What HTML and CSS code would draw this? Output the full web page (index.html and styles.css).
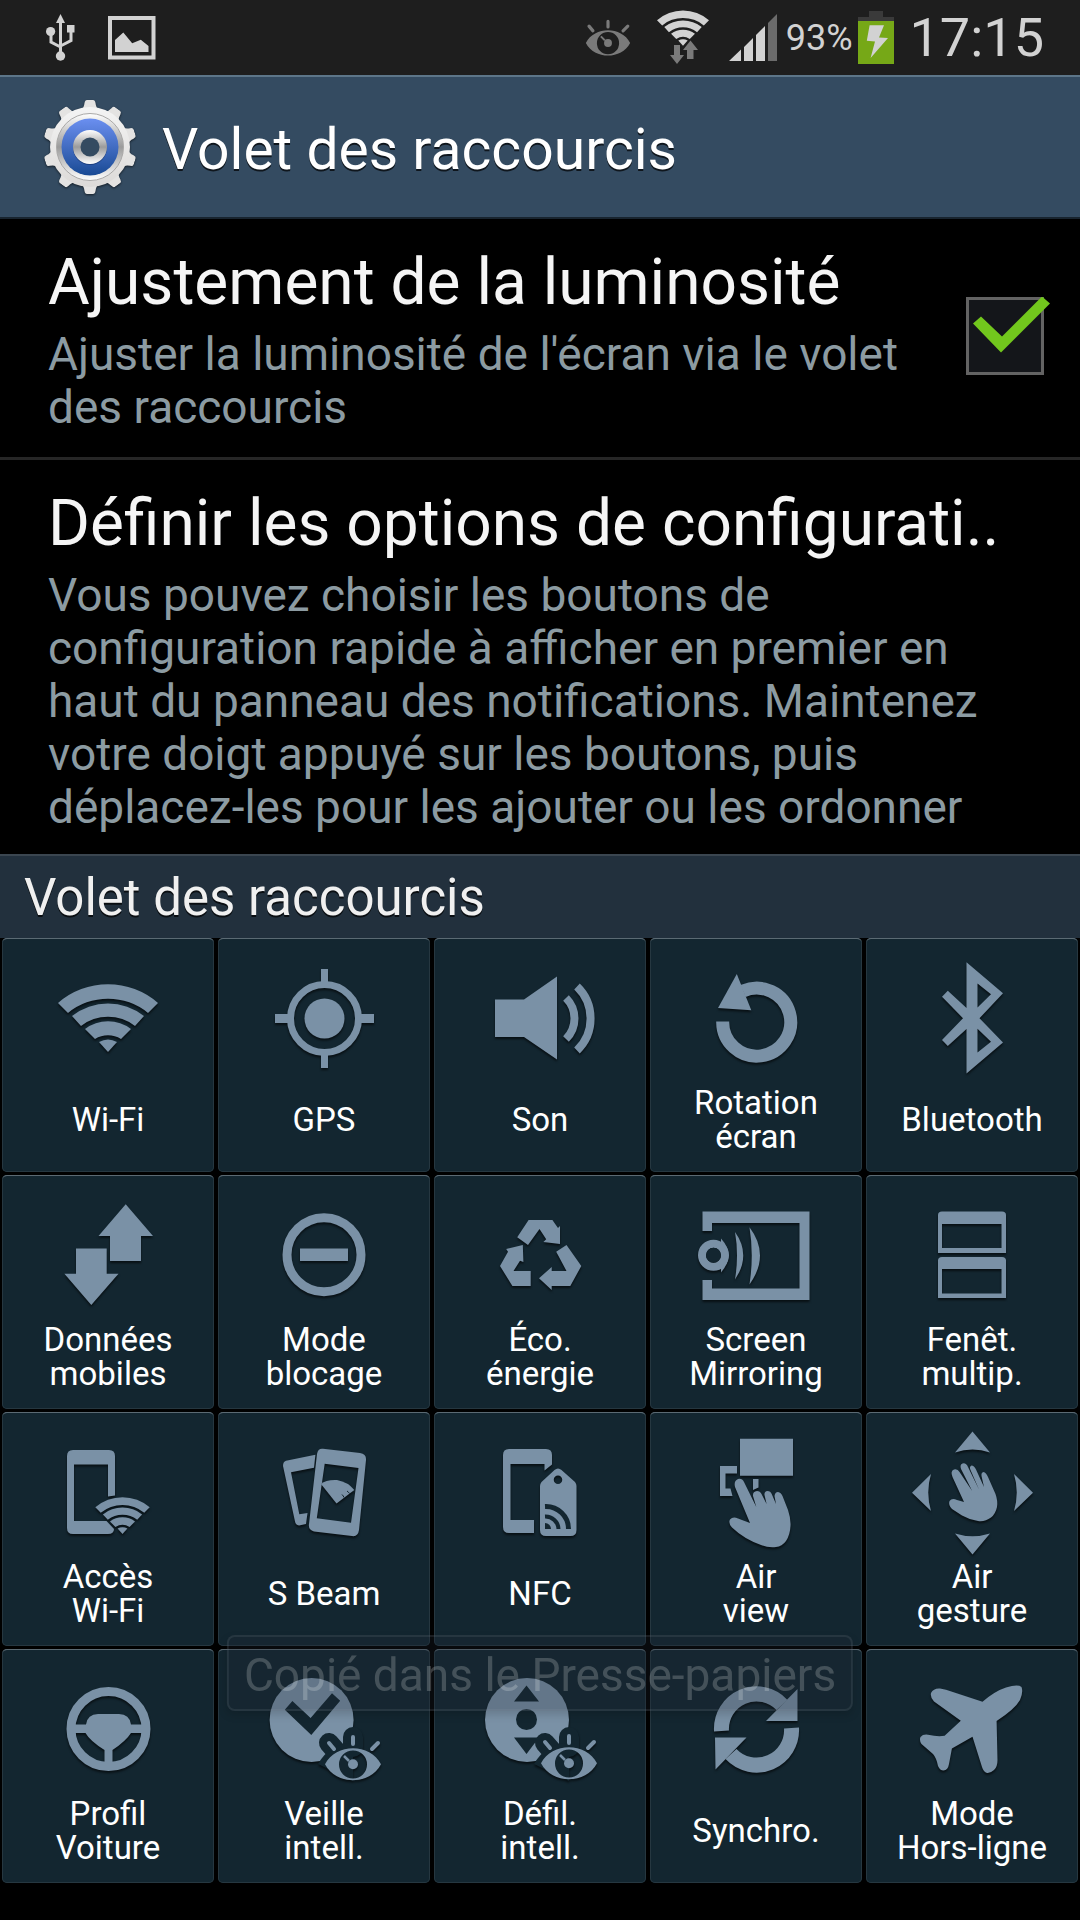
FILE: index.html
```html
<!DOCTYPE html>
<html lang="fr">
<head>
    <meta charset="utf-8">
    <meta name="viewport" content="width=device-width, initial-scale=1">
    <title>Volet des raccourcis</title>
    <link rel="stylesheet" href="styles.css">
</head>
<body>

    <!-- Formes partagées par plusieurs icônes -->
    <svg class="sprite" aria-hidden="true">
        <symbol id="wifi" viewBox="22 46 100 68">
            <path d="M22 65A76 76 0 0 1 122 65L112 75A63 63 0 0 0 32 75Z"/>
            <path d="M36 78A58 58 0 0 1 108 78L99 88A44 44 0 0 0 45 88Z"/>
            <path d="M49 91A38 38 0 0 1 95 91L85 101A25 25 0 0 0 59 101Z"/>
            <path d="M63 104A18 18 0 0 1 81 104L72 114Z"/>
        </symbol>
        <symbol id="eye" viewBox="72 85 58 48">
            <path d="M73 115.300C84 94 118 94 129 115.300C118 136.500 84 136.500 73 115.300ZM101 101.500A14 14 0 1 0 101 129.500A14 14 0 1 0 101 101.500Z" fill-rule="evenodd"/>
            <circle cx="101" cy="115.300" r="5"/>
            <path d="M92 107L97 112" fill="none" stroke="currentColor" stroke-width="2.500"/>
            <path d="M101 88V95M77 94L82 100M126 94L120 100" fill="none" stroke="currentColor" stroke-width="4" stroke-linecap="round"/>
        </symbol>
        <symbol id="tooth" viewBox="0 0 94 94">
            <path d="M38 10Q41 8 41.500 3Q42 0 44 0H50Q52 0 52.500 3Q53 8 56 10Z"/>
        </symbol>
    </svg>

    <header class="status-bar">
        <div class="status-group">
            <svg class="status-icon" width="30" height="50" viewBox="46 13 30 50" aria-hidden="true">
                <path d="M60.500 14L65 23H56Z"/>
                <circle cx="60.500" cy="56" r="4.700"/>
                <circle cx="50.600" cy="31.500" r="4.600"/>
                <path d="M67 25H74.500V32.500H67Z"/>
                <path d="M60.500 22V54M51 34V42L60.500 47M71 32V40.500L60.500 46" fill="none" stroke="currentColor" stroke-width="3"/>
            </svg>
            <svg class="status-icon" width="48" height="44" viewBox="108 16 48 44" aria-hidden="true">
                <path d="M110 18H153.500V57.500H110Z" fill="none" stroke="currentColor" stroke-width="4"/>
                <path d="M115 40L123.300 32.500L132.200 43.300L140.800 39.700L148.500 46V52H115Z"/>
            </svg>
        </div>
        <div class="status-group status-right">
            <svg class="status-eye dim" width="46" height="38" aria-hidden="true"><use href="#eye"/></svg>
            <svg class="status-icon" width="52" height="56" viewBox="0 0 52 56" aria-hidden="true">
                <use href="#wifi" width="52" height="36"/>
                <path class="dim" d="M17 35H23V45H27L20 54L13 45H17Z"/>
                <path class="dim" d="M30 49V40H26L33.500 30.500L41 40H36.500V49Z"/>
            </svg>
            <svg class="status-icon" width="48" height="48" viewBox="728 16 48 48" aria-hidden="true">
                <path d="M728 63L740 51.500V63ZM743 63V49L752 40V63ZM755 63V37L764 28V63Z"/>
                <path class="weak" d="M767 63V25L776 16V63Z"/>
            </svg>
            <span class="battery-level">93%</span>
            <svg class="status-icon" width="36" height="54" viewBox="858 11 36 54" aria-hidden="true">
                <path d="M858 17H869V11H883V17H894V22H858Z" fill="#3a3a3a"/>
                <path d="M858 21H894V64H858Z" fill="#76a817"/>
                <path d="M869.600 25.300H884L879 37.500L888 38L870.600 58L875 41.500L866.800 40.700Z"/>
            </svg>
            <span class="clock">17:15</span>
        </div>
    </header>

    <div class="action-bar">
        <svg class="gear" width="94" height="94" viewBox="0 0 94 94" aria-hidden="true">
            <defs>
                <linearGradient id="metal" x1="0" y1="0" x2="0" y2="1">
                    <stop offset="0" stop-color="#f4f4f4"/>
                    <stop offset="1" stop-color="#dcdad8"/>
                </linearGradient>
                <linearGradient id="rim" x1="0" y1="0" x2="0" y2="1">
                    <stop offset="0" stop-color="#ffffff"/>
                    <stop offset="0.500" stop-color="#9b9b9b"/>
                    <stop offset="1" stop-color="#ffffff"/>
                </linearGradient>
                <linearGradient id="blue" x1="0" y1="0" x2="0" y2="1">
                    <stop offset="0" stop-color="#6b8ff0"/>
                    <stop offset="1" stop-color="#194a94"/>
                </linearGradient>
            </defs>
            <g fill="#e4e3e2">
                <use href="#tooth"/>
                <use href="#tooth" transform="rotate(36 47 47)"/>
                <use href="#tooth" transform="rotate(72 47 47)"/>
                <use href="#tooth" transform="rotate(108 47 47)"/>
                <use href="#tooth" transform="rotate(144 47 47)"/>
                <use href="#tooth" transform="rotate(180 47 47)"/>
                <use href="#tooth" transform="rotate(216 47 47)"/>
                <use href="#tooth" transform="rotate(252 47 47)"/>
                <use href="#tooth" transform="rotate(288 47 47)"/>
                <use href="#tooth" transform="rotate(324 47 47)"/>
            </g>
            <circle cx="47" cy="47" r="40" fill="url(#metal)"/>
            <circle cx="47" cy="47" r="33.500" fill="url(#rim)" stroke="#aaa9a8"/>
            <circle cx="47" cy="47" r="28.500" fill="url(#blue)"/>
            <circle cx="47" cy="48" r="17" fill="#1c3f80"/>
            <circle cx="47" cy="47" r="17" fill="url(#rim)"/>
            <circle cx="47" cy="47" r="9.500" fill="#344b61"/>
        </svg>
        <h1>Volet des raccourcis</h1>
    </div>

    <main>
        <div class="setting">
            <div class="setting-text">
                <label class="setting-title" for="luminosite">Ajustement de la luminosité</label>
                <p>Ajuster la luminosité de l'écran via le volet des raccourcis</p>
            </div>
            <input type="checkbox" id="luminosite" checked>
        </div>
        <div class="setting setting-last">
            <div class="setting-text">
                <h2 class="setting-title">Définir les options de configurati..</h2>
                <p>Vous pouvez choisir les boutons de configuration rapide à afficher en premier en haut du panneau des notifications. Maintenez votre doigt appuyé sur les boutons, puis déplacez-les pour les ajouter ou les ordonner</p>
            </div>
        </div>

        <h2 class="section-title">Volet des raccourcis</h2>

        <div class="tiles">
            <button class="tile" type="button">
                <svg viewBox="0 0 144 148" aria-hidden="true"><use href="#wifi" x="22" y="46" width="100" height="68"/></svg>
                <span>Wi-Fi</span>
            </button>
            <button class="tile" type="button">
                <svg viewBox="0 0 144 148" aria-hidden="true">
                    <circle cx="72.500" cy="80.500" r="20"/>
                    <circle class="line" cx="72.500" cy="80.500" r="34" stroke-width="7"/>
                    <path d="M69 31H76V46H69ZM69 115H76V130H69ZM23 76H38V85H23ZM107 76H122V85H107Z"/>
                </svg>
                <span>GPS</span>
            </button>
            <button class="tile" type="button">
                <svg viewBox="0 0 144 148" aria-hidden="true">
                    <path d="M27 61.500H56L89 38.500V121.500L56 99H27Z"/>
                    <path class="line" d="M98 60A29 29 0 0 1 98 101M109 48.500A44.500 44.500 0 0 1 109 112.500" stroke-width="8"/>
                </svg>
                <span>Son</span>
            </button>
            <button class="tile" type="button">
                <svg viewBox="0 0 144 148" aria-hidden="true">
                    <path class="line" d="M38.700 83.500A34 34 0 1 0 59 53" stroke-width="13"/>
                    <path d="M52.800 36L67.300 72.300L34 70Z"/>
                </svg>
                <span>Rotation<br>écran</span>
            </button>
            <button class="tile" type="button">
                <svg viewBox="0 0 144 148" aria-hidden="true">
                    <path fill-rule="evenodd" d="M66.500 24.300L103 55.300L79.500 80.300L103 104.500L66.500 135.500V91L47.800 108L42 102L63 80.300L42 58.700L47.800 52.700L66.500 70ZM77.500 45.500V69.500L91 56.300ZM77.500 90.700V114.500L91 103.700Z"/>
                </svg>
                <span>Bluetooth</span>
            </button>

            <button class="tile" type="button">
                <svg viewBox="0 0 144 148" aria-hidden="true">
                    <path d="M89.700 29.300L117 61H105V86H74V61H62.500Z"/>
                    <path d="M55.300 130L28.400 98.700H40V73.500H70.700V98.700H82.500Z"/>
                </svg>
                <span>Données<br>mobiles</span>
            </button>
            <button class="tile" type="button">
                <svg viewBox="0 0 144 148" aria-hidden="true">
                    <circle class="line" cx="72" cy="79.700" r="37" stroke-width="9"/>
                    <path d="M48 73.500H96V86H48Z"/>
                </svg>
                <span>Mode<br>blocage</span>
            </button>
            <button class="tile" type="button">
                <svg viewBox="0 0 144 148" aria-hidden="true">
                    <path d="M60.600 45H84.400L90 53L92 51V69L75.400 67L78.200 64.300L71.500 54L60 70L49.200 62.300Z"/>
                    <path d="M38.200 74L54.800 70L55.400 87L52 85.700L45.500 96H62.700V111H44.400L32 91L40 76.700Z"/>
                    <path d="M98.500 70L113.300 91L102.300 111H83.700V115L71 103.300L83.700 92V96H98.500L88.200 76.700Z"/>
                </svg>
                <span>Éco.<br>énergie</span>
            </button>
            <button class="tile" type="button">
                <svg viewBox="0 0 144 148" aria-hidden="true">
                    <path d="M18.500 36.500H125.500V125H18.500V105H28V113.500H115.500V48H28V56H18.500Z"/>
                    <circle class="line" cx="29.500" cy="80.300" r="11.500" stroke-width="8"/>
                    <path d="M37 63.500Q52 80 37 97.500Z"/>
                    <circle class="hole" cx="29.500" cy="80.300" r="7.500"/>
                    <path d="M51 57Q67.500 80 51 104.500Q55 80 51 57ZM65.500 52.300Q86.500 80 65.500 109.500Q70 80 65.500 52.300Z"/>
                </svg>
                <span>Screen<br>Mirroring</span>
            </button>
            <button class="tile" type="button">
                <svg viewBox="0 0 144 148" aria-hidden="true">
                    <path fill-rule="evenodd" d="M38 78V40Q38 36.500 42 36.500H102Q106 36.500 106 40V78ZM42 49V73H101.500V49Z"/>
                    <path fill-rule="evenodd" d="M38 123V85.500Q38 82 42 82H102Q106 82 106 85.500V123ZM42 94V118.500H101.500V94Z"/>
                </svg>
                <span>Fenêt.<br>multip.</span>
            </button>

            <button class="tile" type="button">
                <svg viewBox="0 0 144 148" aria-hidden="true">
                    <path d="M79 83.500L72 84.500V52.500H38V109H70.500L78 117Q78 122 72 122H37Q31 122 31 116V44Q31 38 37 38H73Q79 38 79 44Z"/>
                    <use href="#wifi" x="59" y="85" width="55" height="37"/>
                </svg>
                <span>Accès<br>Wi-Fi</span>
            </button>
            <button class="tile" type="button">
                <svg viewBox="0 0 144 148" aria-hidden="true">
                    <path d="M63.400 42.700L62 55.700L39 60.300L47.300 102.300L55.500 101L54 112L47 113.500Q43.500 113 43 109.500L31 54Q31 49.500 34 48.700Z"/>
                    <path fill-rule="evenodd" d="M71 36.700L108 41Q114.500 42 114 48L107 118Q106 125 100 124L62 119.500Q56 118 57 112L65 42Q66 36 71 36.700ZM72.700 51.700L64.800 106.300L99 110.700L106.500 56Z"/>
                    <path d="M69 72Q74 67.500 85 68Q96 70 102.300 78L84.500 91.500Z"/>
                    <path class="cut" d="M90 82.500Q91.500 84 92 85.500M95 79Q96.500 80 97.500 81.500" stroke-width="1"/>
                </svg>
                <span>S Beam</span>
            </button>
            <button class="tile" type="button">
                <svg viewBox="0 0 144 148" aria-hidden="true">
                    <path d="M66 108V121H41Q35 121 35 115V43Q35 37 41 37H78Q84 37 84 43V52.500L76.500 58.500V52H42.500V108Z"/>
                    <path fill-rule="evenodd" d="M86.500 58Q90 55 93.500 58L107 70Q108.500 72 108.500 74V118Q108.500 124 102.500 124H78Q72 124 72 118V74Q72 72 73.500 70ZM90 63.500A4.200 4.200 0 1 0 90 72A4.200 4.200 0 1 0 90 63.500Z"/>
                    <path class="cut" d="M77 94.500A22.500 22.500 0 0 1 100.500 117" stroke-width="5"/>
                    <path class="cut" d="M77 104.500A13 13 0 0 1 90.500 117" stroke-width="4"/>
                    <path class="hole" d="M77 111A6 6 0 0 1 83 117H77Z"/>
                </svg>
                <span>NFC</span>
            </button>
            <button class="tile" type="button">
                <svg viewBox="0 0 144 148" aria-hidden="true">
                    <path d="M56 26.700H109V63.700H56ZM36 54H53V61.500H41.500V76.500H46.500L48.500 84H36ZM69 67H74.500V75.500L69 78Z"/>
                    <path d="M51 75Q49.500 69 54 67Q58 66 60 70L72.300 95L69 84Q68.500 79.500 73 79Q76 79 77.500 82L82.600 92L80.500 83Q80 79.500 83.500 79Q86.500 79 87.700 82L92 92L90.500 84Q91 80 94 80Q97 80.500 98.500 84L104 98Q107 107 106.500 114Q106 123 102 129Q98 134.500 92 135Q85 136 77 133Q60 127 48 115.500Q44 111 46 107.500Q49 104 54 106.500L66 111Z"/>
                </svg>
                <span>Air<br>view</span>
            </button>
            <button class="tile" type="button">
                <svg viewBox="0 0 144 148" aria-hidden="true">
                    <path d="M72.500 19.500L90 40.500Q72.500 34.500 55 40.500ZM72.500 142.500L90 121.500Q72.500 127 55 121.500ZM12 80.700L31 62Q25.500 80.700 31 99ZM133 80.700L114 62Q119.500 80.700 114 99Z"/>
                    <path d="M52.500 65Q50 59 54 57.500Q57.500 56.500 59.500 60L72.200 79L61 57Q59.500 52.500 62.500 51.500Q66 50.500 68 55L79 77.500L70.500 58Q69 54.500 71.500 53.500Q74 53.500 76 57.500L84 75L81.500 64Q81 60.500 83.500 60Q86 60.500 88 65L95.500 82Q98 89 97 95Q95.500 102 91 105.500Q85 110 78 109Q70 108 62 103.500L52 97Q48 93 49.500 89Q52 85.500 57 88L64 90Z"/>
                </svg>
                <span>Air<br>gesture</span>
            </button>

            <button class="tile" type="button">
                <svg viewBox="0 0 144 148" aria-hidden="true">
                    <circle class="line" cx="72.500" cy="80" r="37.500" stroke-width="9"/>
                    <path d="M37 75.500H50Q51.500 65 62 65H83Q93.500 65 95 75.500H108V84H95Q90 92 76.500 101V115H68.500V101Q54 92 49.500 84H37Z"/>
                </svg>
                <span>Profil<br>Voiture</span>
            </button>
            <button class="tile" type="button">
                <svg viewBox="0 0 144 148" aria-hidden="true">
                    <circle cx="59.600" cy="71" r="42"/>
                    <path class="hole" d="M40.400 52L58.600 69L80 44.300L88.200 51.700L59.300 86L32.800 60.700Z"/>
                    <path class="cut" d="M101 88V98M77 94L84 102" stroke-width="20" stroke-linecap="round"/>
                    <path class="hole" d="M66 115Q78 94 101 94V132Z"/>
                    <use href="#eye" x="72" y="85" width="58" height="48"/>
                </svg>
                <span>Veille<br>intell.</span>
            </button>
            <button class="tile" type="button">
                <svg viewBox="0 0 144 148" aria-hidden="true">
                    <circle cx="59" cy="71" r="42"/>
                    <path class="hole" d="M58.500 36.500L71 52.500H46ZM46 88.500H71L58.500 105Z"/>
                    <circle class="hole" cx="58.500" cy="70.500" r="10.500"/>
                    <path class="cut" d="M101 88V98M77 94L84 102" stroke-width="20" stroke-linecap="round"/>
                    <path class="hole" d="M66 115Q78 94 101 94V132Z"/>
                    <use href="#eye" x="72" y="84" width="58" height="48"/>
                </svg>
                <span>Défil.<br>intell.</span>
            </button>
            <button class="tile" type="button">
                <svg viewBox="0 0 144 148" aria-hidden="true">
                    <path class="line" d="M37.500 82A35 35 0 0 1 98 56M107.500 79A35 35 0 0 1 47 105" stroke-width="15"/>
                    <path d="M113.500 40V72H82ZM31 88.500H62.500L31.500 120.500Z"/>
                </svg>
                <span>Synchro.</span>
            </button>
            <button class="tile" type="button">
                <svg viewBox="0 0 144 148" aria-hidden="true">
                    <path d="M82.500 52.700Q95 42 106 38.500Q118 35 121.500 38Q123.500 43 120 51Q115 60 96.600 72L97.500 111Q97.500 118 94 121Q90 124.500 87 124Q83.500 123 82 118L72.500 87.700L51.900 99.500L49 115Q48 121 43.500 121.500Q40 121.500 38 117Q36.500 109 33 105L21.500 95Q19 91 20.500 88Q23 85 28 85.700Q38 88 44.600 86.700L60.800 71.700L34 52.500Q30 48.500 31 44Q33.500 39 40 39.500L46 40.700Z"/>
                </svg>
                <span>Mode<br>Hors-ligne</span>
            </button>
        </div>
    </main>

    <div class="toast" role="status">Copié dans le Presse-papiers</div>

</body>
</html>
```

FILE: styles.css
```css
* {
    box-sizing: border-box;
}

body {
    margin: 0;
    min-height: 100vh;
    background-color: #000000;
    color: #ffffff;
    font-family: Roboto, "Noto Sans", sans-serif;
}

h1, h2, p {
    margin: 0;
    font-weight: normal;
}

svg {
    display: block;
    flex-shrink: 0;
    fill: currentColor;
}

.sprite {
    position: absolute;
    width: 0;
    height: 0;
}

/* Barre d'état */
.status-bar {
    display: flex;
    justify-content: space-between;
    height: 75px;
    padding: 0 36px 0 46px;
    background-color: #1e1e1e;
    color: #d2d2d2;
}

.status-group {
    display: flex;
    align-items: center;
    gap: 32px;
}

.status-right {
    gap: 20px;
}

.status-eye {
    margin-right: 6px;
}

.dim {
    color: #7a7a7a;
    fill: #7a7a7a;
}

.weak {
    fill: #6b6b6b;
}

.battery-level {
    margin: 0 -15px 0 -11px;
    font-size: 36px;
}

.clock {
    margin-left: -4px;
    font-size: 54px;
}

/* Titre */
.action-bar {
    display: flex;
    align-items: center;
    gap: 25px;
    height: 144px;
    padding-left: 43px;
    background-color: #344b61;
    border-top: 2px solid #5d7689;
    border-bottom: 2px solid #18242f;
}

.gear {
    filter: drop-shadow(0 1px 1px rgba(0, 0, 0, 0.6));
}

h1 {
    padding-top: 4px;
    font-size: 57px;
    line-height: 67px;
    text-shadow: 0 2px 0 rgba(0, 0, 0, 0.7);
}

/* Réglages */
.setting {
    display: flex;
    align-items: center;
    justify-content: space-between;
    padding: 26px 36px 23px 48px;
    border-bottom: 3px solid #262626;
}

.setting-last {
    padding-bottom: 20px;
    border-bottom: none;
}

.setting-text {
    flex: 1;
    max-width: 940px;
}

.setting-title {
    display: block;
    margin-bottom: 8px;
    color: #f5f5f5;
    font-size: 64px;
    line-height: 75px;
    white-space: nowrap;
}

.setting p {
    color: #8c9ba2;
    font-size: 46px;
    line-height: 53px;
}

input[type="checkbox"] {
    appearance: none;
    position: relative;
    width: 78px;
    height: 78px;
    margin: 0 0 8px 32px;
    background-color: #14161a;
    border: 3px solid #636363;
}

input[type="checkbox"]:checked::after {
    content: "";
    position: absolute;
    top: -3px;
    left: 4px;
    width: 78px;
    height: 56px;
    background-color: #72c71d;
    clip-path: polygon(8px 20px, 29px 40px, 69px 0, 77px 7px, 28px 56px, 0 27px);
}

.section-title {
    padding: 12px 24px 10px;
    background-color: #22303d;
    border-top: 2px solid #3b4650;
    color: #f0f0f0;
    font-size: 51px;
    line-height: 60px;
    text-shadow: 0 2px 0 rgba(0, 0, 0, 0.7);
}

/* Grille des raccourcis */
.tiles {
    display: grid;
    grid-template-columns: repeat(5, 1fr);
    gap: 3px 4px;
    padding: 0 2px;
}

.tile {
    display: flex;
    flex-direction: column;
    align-items: center;
    height: 234px;
    padding: 0;
    background-color: #132630;
    border: none;
    border-radius: 5px;
    box-shadow: inset 0 2px 0 -1px #5b6a73, inset 0 0 0 1px #263740;
    color: #ffffff;
    font-family: inherit;
    font-size: 33px;
    line-height: 34px;
    cursor: pointer;
}

.tile svg {
    width: 144px;
    height: 148px;
    color: #7a91a6;
    filter: drop-shadow(0 2px 1px rgba(0, 0, 0, 0.6));
}

.tile span {
    display: flex;
    align-items: center;
    min-height: 68px;
}

.line {
    fill: none;
    stroke: currentColor;
}

.hole {
    fill: #132630;
}

.cut {
    fill: none;
    stroke: #132630;
}

.toast {
    position: fixed;
    bottom: 209px;
    left: 50%;
    transform: translateX(-50%);
    padding: 12px 15px 8px;
    background-color: rgba(30, 40, 50, 0.25);
    border: 2px solid rgba(160, 170, 180, 0.12);
    border-radius: 8px;
    box-shadow: 0 4px 8px rgba(0, 0, 0, 0.15);
    color: rgba(255, 255, 255, 0.2);
    font-size: 46px;
    line-height: 52px;
    white-space: nowrap;
}
```
